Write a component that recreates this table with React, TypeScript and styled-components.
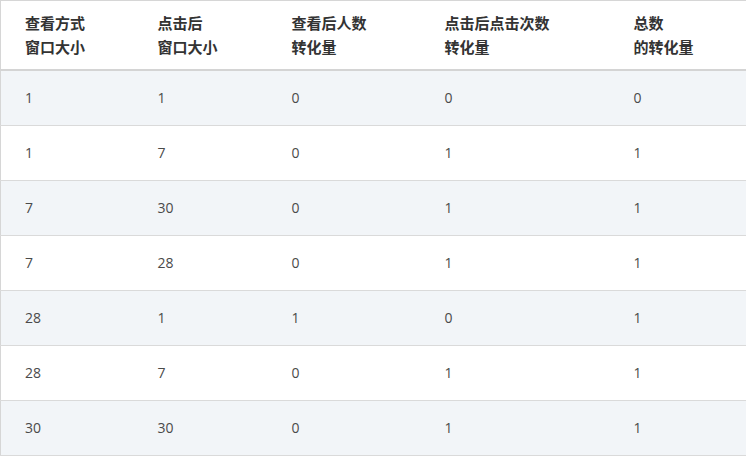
import React from 'react'
import styled, { createGlobalStyle } from 'styled-components'

const GlobalStyle = createGlobalStyle`
  html, body {
    margin: 0;
    padding: 0;
    background: #ffffff;
  }
  body {
    font-family: "Open Sans", "Noto Sans CJK SC", sans-serif;
  }
`

type Row = [number, number, number, number, number]

const headers = [
  ['查看方式', '窗口大小'],
  ['点击后', '窗口大小'],
  ['查看后人数', '转化量'],
  ['点击后点击次数', '转化量'],
  ['总数', '的转化量'],
]

const colWidths = [133, 134, 153, 189, 137]

const rows: Row[] = [
  [1, 1, 0, 0, 0],
  [1, 7, 0, 1, 1],
  [7, 30, 0, 1, 1],
  [7, 28, 0, 1, 1],
  [28, 1, 1, 0, 1],
  [28, 7, 0, 1, 1],
  [30, 30, 0, 1, 1],
]

export default function App() {
  return (
    <>
      <GlobalStyle />
      <Table>
        <colgroup>
          {colWidths.map((w, i) => (
            <col key={i} style={{ width: w }} />
          ))}
        </colgroup>
        <thead>
          <tr>
            {headers.map((lines, i) => (
              <HeadCell key={i}>
                {lines[0]}
                <br />
                {lines[1]}
              </HeadCell>
            ))}
          </tr>
        </thead>
        <tbody>
          {rows.map((row, i) => (
            <BodyRow key={i} $striped={i % 2 === 0}>
              {row.map((v, j) => (
                <Cell key={j}>{v}</Cell>
              ))}
            </BodyRow>
          ))}
        </tbody>
      </Table>
    </>
  )
}

const Table = styled.table`
  width: 746px;
  table-layout: fixed;
  border-collapse: collapse;
  border: 1px solid #d6d6d6;
  border-right-width: 2px;
`

const HeadCell = styled.th`
  height: 48px;
  padding: 10px 8px 10px 24px;
  text-align: left;
  vertical-align: middle;
  font-family: "Noto Sans CJK SC", sans-serif;
  font-size: 15px;
  line-height: 24px;
  font-weight: 700;
  color: #333333;
  border-bottom: 2px solid #d4d4d4;
`

const BodyRow = styled.tr<{ $striped: boolean }>`
  background-color: ${(p) => (p.$striped ? '#f2f5f8' : '#ffffff')};
  border-bottom: 1px solid #dadada;
`

const Cell = styled.td`
  height: 54px;
  padding: 0 8px 0 24px;
  vertical-align: middle;
  font-size: 14px;
  line-height: 20px;
  color: #4a4a4a;
`
